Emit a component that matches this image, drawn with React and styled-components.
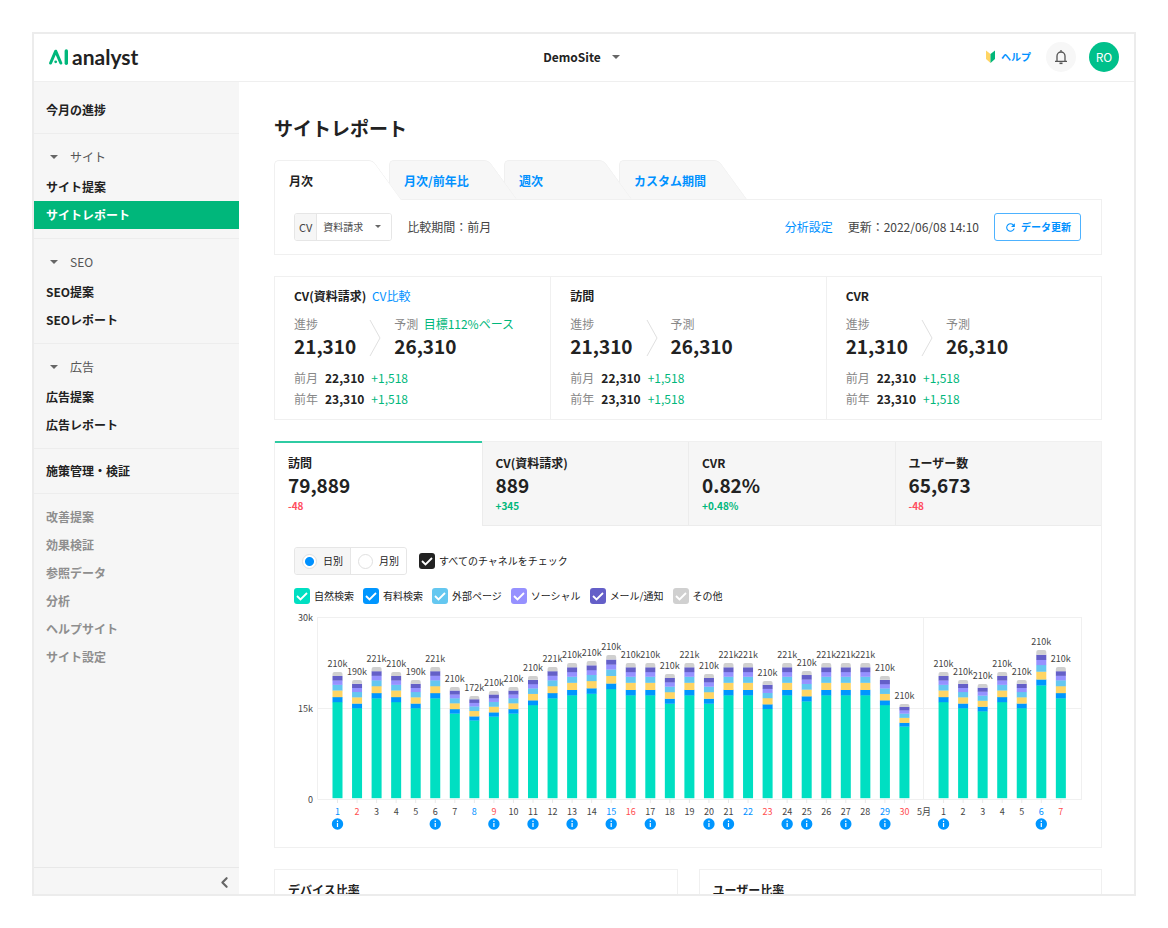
import { useState } from "react";
import styled, { createGlobalStyle } from "styled-components";
import { LuChevronLeft } from "react-icons/lu";
import { MdRefresh } from "react-icons/md";

const GlobalStyle = createGlobalStyle`
  *, *::before, *::after {
    box-sizing: border-box;
  }

  body {
    margin: 0;
    background: #fff;
    color: #222;
    font-family: "Noto Sans CJK JP", sans-serif;
    font-size: 12px;
    line-height: 18px;
  }

  button, input, select {
    font: inherit;
    color: inherit;
    margin: 0;
  }

  a {
    color: #0091ff;
    text-decoration: none;
  }

  h1, h2, p, ul, dl, dd, fieldset {
    margin: 0;
    padding: 0;
  }
`;

const Page = styled.div`
  height: 100vh;
  padding: 32px;
`;

const Frame = styled.div`
  height: 100%;
  display: flex;
  flex-direction: column;
  border: 2px solid #ececec;
  overflow: hidden;
`;

/* ---------- header ---------- */

const Header = styled.header`
  flex: none;
  height: 48px;
  display: grid;
  grid-template-columns: 1fr auto 1fr;
  align-items: center;
  padding: 0 15px 2px;
  border-bottom: 1px solid #efefef;
`;

const Logo = styled.a`
  display: flex;
  align-items: center;
  gap: 3px;
  color: #222;
  font-family: Lato, sans-serif;
  font-size: 21px;
  font-weight: 700;
  line-height: 24px;
`;

const SiteButton = styled.button`
  display: flex;
  align-items: center;
  gap: 6px;
  padding: 0;
  border: 0;
  background: none;
  font-weight: 700;
  line-height: 16px;
`;

const HeaderRight = styled.div`
  display: flex;
  align-items: center;
  justify-content: flex-end;
`;

const HelpLink = styled.a`
  display: flex;
  align-items: center;
  gap: 6px;
  margin-right: 15px;
  font-size: 10px;
  font-weight: 700;
`;

const RoundButton = styled.button`
  width: 30px;
  height: 30px;
  display: flex;
  align-items: center;
  justify-content: center;
  padding: 0;
  border: 0;
  border-radius: 50%;
  background: ${(p) => (p.$green ? "#00c08b" : "#f7f7f7")};
  color: ${(p) => (p.$green ? "#fff" : "#555")};

  & + & {
    margin-left: 13px;
  }
`;

/* ---------- sidebar ---------- */

const Body = styled.div`
  flex: 1;
  min-height: 0;
  display: flex;
`;

const Sidebar = styled.nav`
  flex: none;
  width: 205px;
  display: flex;
  flex-direction: column;
  background: #f6f6f6;
`;

const NavSection = styled.div`
  padding: ${(p) => p.$pad || "9px 0"};
  border-bottom: ${(p) => (p.$last ? 0 : 1)}px solid #ededed;
`;

const NavGroupButton = styled.button`
  width: 100%;
  height: 28px;
  display: flex;
  align-items: center;
  gap: 8px;
  margin-bottom: 2px;
  padding: 0 12px;
  border: 0;
  background: none;
  color: #555;
`;

const NavLink = styled.a`
  display: flex;
  align-items: center;
  height: 28px;
  padding: 0 12px;
  font-weight: 700;
  color: ${(p) => (p.$active ? "#fff" : p.$muted ? "#8e8e8e" : "#222")};
  background: ${(p) => (p.$active ? "#00b77b" : "transparent")};
`;

const SidebarFooter = styled.div`
  height: 27px;
  display: flex;
  align-items: center;
  justify-content: flex-end;
  margin-top: auto;
  padding: 2px 6px 0;
  border-top: 1px solid #e8e8e8;
`;

const CollapseButton = styled.button`
  display: flex;
  padding: 0;
  border: 0;
  background: none;
  color: #666;
  font-size: 17px;
`;

/* ---------- main ---------- */

const Main = styled.main`
  flex: 1;
  min-width: 0;
  padding: 32px 32px 0 35px;
  overflow: hidden;
`;

const Title = styled.h1`
  margin-bottom: 18px;
  font-size: 19px;
  font-weight: 700;
  line-height: 28px;
`;

const Tabs = styled.div`
  display: flex;
  height: 39px;
`;

const Tab = styled.button`
  --fill: ${(p) => (p.$active ? "#fff" : "#f7f7f7")};
  position: relative;
  z-index: ${(p) => p.$level};
  width: 115px;
  padding: 2px 15px 0;
  border: 0;
  background: none;
  color: ${(p) => (p.$active ? "#222" : "#0091ff")};
  font-weight: 700;
  text-align: left;
  white-space: nowrap;

  &::before,
  &::after {
    content: "";
    position: absolute;
    z-index: -1;
    top: 0;
    bottom: ${(p) => (p.$active ? "-1px" : 0)};
    background: var(--fill);
    border-top: 1px solid #f0f0f0;
  }

  &::before {
    left: 0;
    width: 80px;
    border-left: 1px solid #f0f0f0;
    border-top-left-radius: 5px;
  }

  /* slanted right edge */
  &::after {
    left: 64px;
    width: 64px;
    border-right: 1px solid #f0f0f0;
    border-top-right-radius: 5px;
    transform: skewX(36deg);
    transform-origin: bottom right;
  }
`;

const Panel = styled.section`
  margin-bottom: 21px;
  border: 1px solid #f0f0f0;
`;

const Toolbar = styled(Panel)`
  display: flex;
  align-items: center;
  gap: 15px;
  padding: 13px 20px 13px 19px;
`;

const Spacer = styled.div`
  flex: 1;
`;

const SelectBox = styled.label`
  position: relative;
  display: flex;
  align-items: center;
  height: 28px;
  border: 1px solid #e6e6e6;
  border-radius: 3px;
  overflow: hidden;
  color: #444;
  font-size: 10px;

  > span {
    padding: 0 4px;
    background: #f6f6f6;
    line-height: 26px;
    font-size: 11px;
  }

  > svg {
    position: absolute;
    right: 4px;
    pointer-events: none;
  }
`;

const Select = styled.select`
  appearance: none;
  width: 75px;
  height: 26px;
  padding: 0 6px;
  border: 0;
  border-left: 1px solid #e6e6e6;
  background: #fff;
`;

const Muted = styled.span`
  color: #444;
`;

const RefreshButton = styled.button`
  display: flex;
  align-items: center;
  gap: 4px;
  height: 28px;
  padding: 0 9px;
  border: 1px solid #4db2ff;
  border-radius: 3px;
  background: #fff;
  color: #0091ff;
  font-size: 10px;
  font-weight: 700;
`;

const Summary = styled(Panel)`
  display: grid;
  grid-template-columns: repeat(3, 1fr);
`;

const SummaryCell = styled.div`
  padding: 10px 19px;

  & + & {
    border-left: 1px solid #f0f0f0;
  }
`;

const CellTitle = styled.h2`
  margin-bottom: 10px;
  font-size: 12px;
  font-weight: 700;

  a {
    margin-left: 3px;
    font-weight: 400;
  }
`;

const Pace = styled.div`
  display: flex;
  gap: 13px;
  margin-bottom: 8px;

  > svg {
    flex: none;
    margin-top: 4px;
  }
`;

const PaceLabel = styled.p`
  color: #888;
  white-space: nowrap;
`;

const Green = styled.span`
  color: #00b77b;
`;

const BigNumber = styled.p`
  font-size: 19px;
  font-weight: 700;
  line-height: 26px;
`;

const Compare = styled.p`
  display: flex;
  gap: 7px;
  line-height: 21px;
  color: #888;

  strong {
    color: #222;
    font-weight: 700;
  }
`;

const KpiTabs = styled.div`
  display: grid;
  grid-template-columns: repeat(4, 1fr);
`;

const KpiTab = styled.button`
  height: 84px;
  display: block;
  padding: 10px 14px 12px 13px;
  border: 0;
  border-bottom: 1px solid ${(p) => (p.$active ? "#fff" : "#ececec")};
  background: ${(p) => (p.$active ? "#fff" : "#f6f6f6")};
  box-shadow: ${(p) => (p.$active ? "0 -1px 0 #2fcba3, inset 0 1px 0 #2fcba3" : "none")};
  text-align: left;
  font-weight: 700;

  & + & {
    border-left: 1px solid #ececec;
  }
`;

const Delta = styled.p`
  margin-top: 2px;
  color: ${(p) => (p.$down ? "#ff4d5e" : "#00b77b")};
  font-size: 10px;
  line-height: 12px;
`;

const ChartBody = styled.div`
  padding: 21px 19px 14px;
`;

const Controls = styled.div`
  display: flex;
  align-items: center;
  gap: 12px;
  margin-bottom: 12px;
`;

const RadioGroup = styled.fieldset`
  display: flex;
  height: 28px;
  border: 1px solid #e6e6e6;
  border-radius: 3px;
  overflow: hidden;
`;

const RadioLabel = styled.label`
  display: flex;
  align-items: center;
  gap: 6px;
  padding: 0 7px;
  background: ${(p) => (p.$on ? "#f6f6f6" : "#fff")};
  font-size: 10px;

  & + & {
    border-left: 1px solid #e6e6e6;
  }
`;

const Radio = styled.input`
  appearance: none;
  width: 15px;
  height: 15px;
  border: 1px solid #e0e0e0;
  border-radius: 50%;
  background: #fff;

  &:checked {
    background: radial-gradient(circle, #0091ff 4px, #fff 5px);
  }
`;

const CheckLabel = styled.label`
  position: relative;
  display: flex;
  align-items: center;
  gap: 4px;
  font-size: 10px;

  > svg {
    position: absolute;
    left: 0;
    pointer-events: none;
  }
`;

const Checkbox = styled.input`
  appearance: none;
  width: 16px;
  height: 16px;
  border-radius: 3px;
  background: ${(p) => p.$color};
`;

const Channels = styled.div`
  display: flex;
  flex-wrap: wrap;
  gap: 9px;
  margin-bottom: 6px;
`;

const Chart = styled.svg`
  display: block;
  width: 100%;
  height: auto;
  font-size: 9px;
  fill: #444;
`;

const Ratios = styled.div`
  display: grid;
  grid-template-columns: 1fr 1fr;
  gap: 21px;
`;

const RatioPanel = styled(Panel)`
  min-height: 200px;
  padding: 11px 13px;
`;

const SectionTitle = styled.h2`
  font-size: 12px;
  font-weight: 700;
`;

/* ---------- data ---------- */

const groups = [
  { name: "サイト", items: ["サイト提案", "サイトレポート"] },
  { name: "SEO", items: ["SEO提案", "SEOレポート"] },
  { name: "広告", items: ["広告提案", "広告レポート"] },
];

const extraLinks = ["改善提案", "効果検証", "参照データ", "分析", "ヘルプサイト", "サイト設定"];

const periods = ["月次", "月次/前年比", "週次", "カスタム期間"];

const summary = [
  { title: "CV(資料請求)", link: "CV比較", pace: "目標112%ペース" },
  { title: "訪問" },
  { title: "CVR" },
];

const kpis = [
  { name: "訪問", value: "79,889", delta: "-48" },
  { name: "CV(資料請求)", value: "889", delta: "+345" },
  { name: "CVR", value: "0.82%", delta: "+0.48%" },
  { name: "ユーザー数", value: "65,673", delta: "-48" },
];

const channels = [
  { name: "自然検索", color: "#00dfc2" },
  { name: "有料検索", color: "#0096ff" },
  { name: "外部ページ", color: "#64c7f0" },
  { name: "ソーシャル", color: "#9691ff" },
  { name: "メール/通知", color: "#645fc8" },
  { name: "その他", color: "#d0d0d0" },
];

// share of each layer, bottom to top
const layers = [
  ["#00dfc2", 288],
  ["#0096ff", 15],
  ["#ffd564", 20],
  ["#64c7f0", 17],
  ["#9691ff", 13],
  ["#645fc8", 13],
  ["#d0d0d0", 12],
];
const layerTotal = 378;

const heights = [
  126, 118, 131, 126, 118, 131, 111, 102, 107, 111, 122, 131, 135, 137, 143,
  135, 135, 124, 135, 124, 135, 135, 117, 135, 127, 135, 135, 135, 122, 94,
  null, 126, 118, 114, 126, 118, 148, 131,
];
const is221 = [3, 6, 12, 19, 21, 22, 24, 26, 27, 28];
const is190 = [2, 5];
const blueDays = [1, 8, 15, 22, 29, 37];
const redDays = [2, 9, 16, 23, 30, 38];
const notes = [1, 6, 9, 11, 13, 15, 17, 20, 21, 24, 25, 27, 29, 32, 37];

const days = heights.map((height, i) => {
  const n = i + 1;
  let label = "210k";
  if (is221.includes(n)) label = "221k";
  if (is190.includes(n)) label = "190k";
  if (n === 8) label = "172k";
  return {
    n,
    height,
    label,
    day: n === 31 ? "5月" : n > 31 ? n - 31 : n,
    color: blueDays.includes(n) ? "#0091ff" : redDays.includes(n) ? "#ff4d4f" : "#444",
    note: notes.includes(n),
  };
});

/* ---------- small drawings ---------- */

function Caret({ width = 18, size = 4 }) {
  const c = width / 2;
  return (
    <svg width={width} height="10" aria-hidden="true">
      <path d={`M${c - size} 3h${size * 2}l-${size} ${size}z`} fill="#666" />
    </svg>
  );
}

function LogoMark() {
  return (
    <svg width="20" height="16" viewBox="0 0 20 16" fill="none" aria-hidden="true">
      <path d="M1.6 14 6.7 2.2l5.1 11.8" stroke="#00b77b" strokeWidth="3" strokeLinecap="round" strokeLinejoin="round" />
      <circle cx="6.7" cy="12.8" r="1.4" fill="#00b77b" />
      <path d="M17.3 2v12.2" stroke="#00b77b" strokeWidth="3.4" strokeLinecap="round" />
    </svg>
  );
}

function BeginnerMark() {
  return (
    <svg width="9" height="13" viewBox="0 0 9 13" aria-hidden="true">
      <path d="M0 .5 4.5 4v9L0 9z" fill="#ffd564" />
      <path d="M9 .5 4.5 4v9L9 9z" fill="#00b77b" />
    </svg>
  );
}

function Bell() {
  return (
    <svg width="14" height="16" viewBox="0 0 14 16" fill="none" stroke="currentColor" strokeWidth="1.3" aria-hidden="true">
      <path d="M3 12V7a4 4 0 0 1 8 0v5M1 12.3h12M7 3V1" />
      <path d="M5.5 14.3h3" strokeWidth="1.6" />
    </svg>
  );
}

function Check({ id, label, color }) {
  return (
    <CheckLabel htmlFor={id}>
      <Checkbox type="checkbox" id={id} $color={color} defaultChecked />
      <svg width="16" height="16" fill="none" stroke="#fff" strokeWidth="1.8" aria-hidden="true">
        <path d="m3 8 3.5 3.5L13 5" />
      </svg>
      {label}
    </CheckLabel>
  );
}

function VisitsChart() {
  const base = 188;
  return (
    <Chart viewBox="0 0 788 222" role="img" aria-label="訪問">
      <g stroke="#f0f0f0" fill="none">
        <path d="M23.5 6.5h765M23.5 97.5h765M23.5 188.5h765M23.5 6v182M629.5 6v182M787.5 6v182" />
      </g>
      <g textAnchor="end">
        <text x="19" y="10">30k</text>
        <text x="19" y="101">15k</text>
        <text x="19" y="192">0</text>
      </g>
      {days.map((d, i) => {
        const x = 43.5 + i * 19.55;
        let y = base - 1;
        return (
          <g key={d.n} textAnchor="middle">
            {d.height && (
              <>
                {layers.map(([color, share], k) => {
                  const h = (share / layerTotal) * d.height;
                  y -= h;
                  return k === layers.length - 1 ? (
                    <path key={color} d={`M${x - 5} ${y + h}v${2 - h}q0-2 2-2h6q2 0 2 2v${h - 2}z`} fill={color} />
                  ) : (
                    <rect key={color} x={x - 5} y={y} width="10" height={h + 0.2} fill={color} />
                  );
                })}
                <text x={x} y={base - 1 - d.height - 5}>{d.label}</text>
                <path d={`M${x} ${base}v4`} stroke="#e8e8e8" />
              </>
            )}
            <text x={x} y="204" fill={d.color}>{d.day}</text>
            {d.note && (
              <>
                <circle cx={x} cy="213" r="5.7" fill="#0096ff" />
                <path d={`M${x} 212v4M${x} 209.6v1.4`} stroke="#fff" strokeWidth="1.2" />
              </>
            )}
          </g>
        );
      })}
    </Chart>
  );
}

export default function App() {
  const [unit, setUnit] = useState("日別");

  return (
    <Page>
      <GlobalStyle />
      <Frame>
        <Header>
          <Logo href="#">
            <LogoMark />
            analyst
          </Logo>
          <SiteButton type="button">
            DemoSite
            <Caret />
          </SiteButton>
          <HeaderRight>
            <HelpLink href="#help">
              <BeginnerMark />
              ヘルプ
            </HelpLink>
            <RoundButton type="button" aria-label="お知らせ">
              <Bell />
            </RoundButton>
            <RoundButton type="button" $green>RO</RoundButton>
          </HeaderRight>
        </Header>
        <Body>
          <Sidebar>
            <NavSection $pad="14px 0 9px">
              <NavLink href="#progress">今月の進捗</NavLink>
            </NavSection>
            {groups.map((group) => (
              <NavSection key={group.name}>
                <NavGroupButton type="button">
                  <Caret width={16} />
                  {group.name}
                </NavGroupButton>
                {group.items.map((item) => (
                  <NavLink key={item} href="#page" $active={item === "サイトレポート"}>{item}</NavLink>
                ))}
              </NavSection>
            ))}
            <NavSection $pad="8px 0">
              <NavLink href="#tasks">施策管理・検証</NavLink>
            </NavSection>
            <NavSection $last>
              {extraLinks.map((item) => (
                <NavLink key={item} href="#page" $muted>{item}</NavLink>
              ))}
            </NavSection>
            <SidebarFooter>
              <CollapseButton type="button" aria-label="メニューを閉じる">
                <LuChevronLeft strokeWidth={3} />
              </CollapseButton>
            </SidebarFooter>
          </Sidebar>
          <Main>
            <Title>サイトレポート</Title>
            <Tabs>
              {periods.map((period, i) => (
                <Tab key={period} type="button" $active={i === 0} $level={periods.length - i}>{period}</Tab>
              ))}
            </Tabs>
            <Toolbar>
              <SelectBox htmlFor="cv">
                <span>CV</span>
                <Select id="cv">
                  <option>資料請求</option>
                </Select>
                <Caret size={3} />
              </SelectBox>
              <Muted>比較期間：前月</Muted>
              <Spacer />
              <a href="#settings">分析設定</a>
              <Muted>更新：2022/06/08 14:10</Muted>
              <RefreshButton type="button">
                <MdRefresh size={13} />
                データ更新
              </RefreshButton>
            </Toolbar>
            <Summary>
              {summary.map((cell) => (
                <SummaryCell key={cell.title}>
                  <CellTitle>
                    {cell.title} {cell.link && <a href="#compare">{cell.link}</a>}
                  </CellTitle>
                  <Pace>
                    <div>
                      <PaceLabel>進捗</PaceLabel>
                      <BigNumber>21,310</BigNumber>
                    </div>
                    <svg width="12" height="38" fill="none" stroke="#e0e0e0" aria-hidden="true">
                      <path d="M1 1l10 18L1 37" />
                    </svg>
                    <div>
                      <PaceLabel>
                        予測 {cell.pace && <Green>&nbsp;{cell.pace}</Green>}
                      </PaceLabel>
                      <BigNumber>26,310</BigNumber>
                    </div>
                  </Pace>
                  <Compare>
                    前月 <strong>22,310</strong> <Green>+1,518</Green>
                  </Compare>
                  <Compare>
                    前年 <strong>23,310</strong> <Green>+1,518</Green>
                  </Compare>
                </SummaryCell>
              ))}
            </Summary>
            <Panel>
              <KpiTabs>
                {kpis.map((kpi, i) => (
                  <KpiTab key={kpi.name} type="button" $active={i === 0}>
                    <p>{kpi.name}</p>
                    <BigNumber>{kpi.value}</BigNumber>
                    <Delta $down={kpi.delta.startsWith("-")}>{kpi.delta}</Delta>
                  </KpiTab>
                ))}
              </KpiTabs>
              <ChartBody>
                <Controls>
                  <RadioGroup>
                    {["日別", "月別"].map((name) => (
                      <RadioLabel key={name} $on={unit === name}>
                        <Radio type="radio" name="unit" checked={unit === name} onChange={() => setUnit(name)} />
                        {name}
                      </RadioLabel>
                    ))}
                  </RadioGroup>
                  <Check id="all" label="すべてのチャネルをチェック" color="#222" />
                </Controls>
                <Channels>
                  {channels.map((c, i) => (
                    <Check key={c.name} id={`channel-${i}`} label={c.name} color={c.color} />
                  ))}
                </Channels>
                <VisitsChart />
              </ChartBody>
            </Panel>
            <Ratios>
              <RatioPanel>
                <SectionTitle>デバイス比率</SectionTitle>
              </RatioPanel>
              <RatioPanel>
                <SectionTitle>ユーザー比率</SectionTitle>
              </RatioPanel>
            </Ratios>
          </Main>
        </Body>
      </Frame>
    </Page>
  );
}
